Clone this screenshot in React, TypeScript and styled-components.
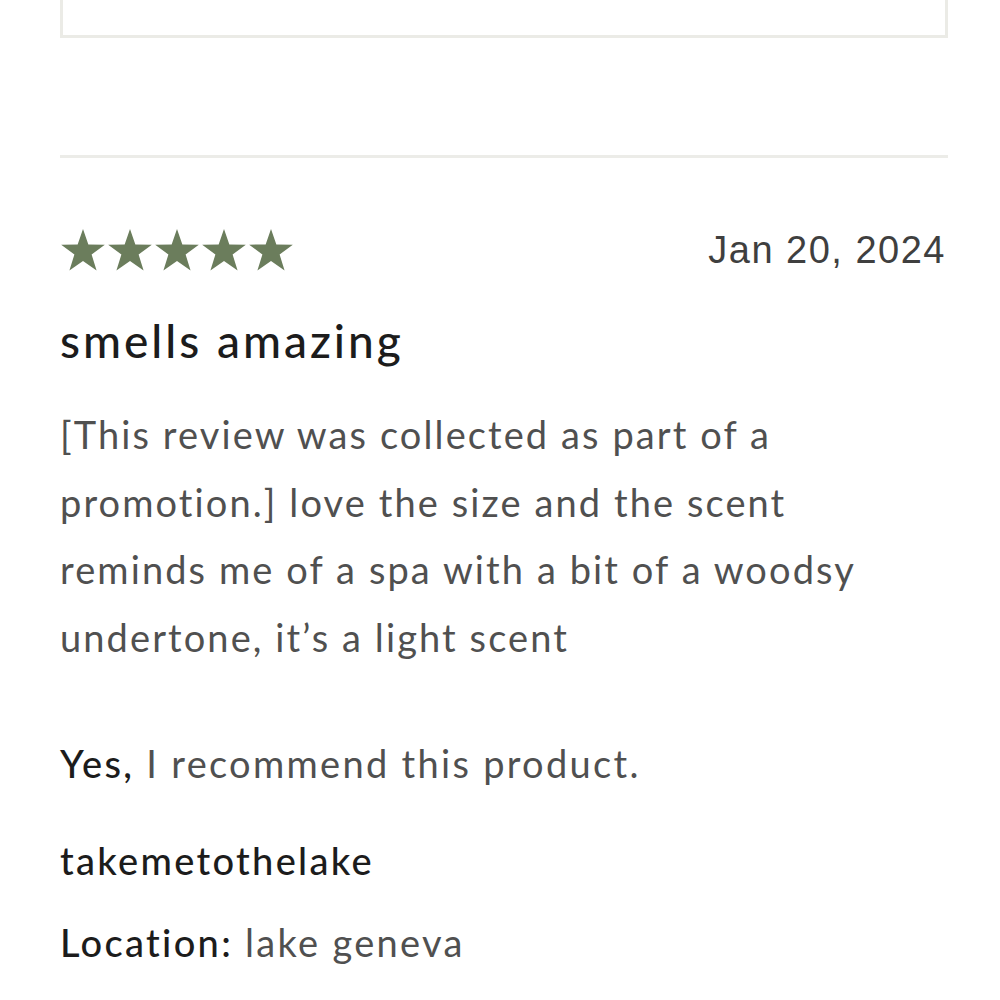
import React from "react";
import styled, { createGlobalStyle } from "styled-components";

const Global = createGlobalStyle`
  html, body { margin: 0; padding: 0; background: #ffffff; }
  body { font-family: Lato, "Noto Sans", sans-serif; }
`;

const Page = styled.div`
  padding: 0 52px 0 60px;
  display: flex;
  flex-direction: column;
`;

const CardBottom = styled.div`
  height: 35px;
  border: 3px solid #ebebe6;
  border-top: none;
`;

const Divider = styled.hr`
  margin: 117px 0 0 0;
  border: none;
  height: 3px;
  background: #ececE8;
`;

const Review = styled.article`
  display: flex;
  flex-direction: column;
  padding-top: 70px;
`;

const HeaderRow = styled.div`
  display: flex;
  justify-content: space-between;
  align-items: center;
  height: 44px;
`;

const Stars = styled.div`
  display: flex;
  gap: 1px;
`;

const DateText = styled.span`
  font-family: "Liberation Sans", Arial, sans-serif;
  font-size: 38px;
  letter-spacing: 1.5px;
  color: #3f3f3f;
  margin-right: 2px;
`;

const Title = styled.h2`
  margin: 42px 0 0 0;
  font-size: 46px;
  font-weight: 500;
  letter-spacing: 3px;
  color: #1c1c1c;
  line-height: 54px;
`;

const Body = styled.p`
  margin: 33px 0 0 0;
  font-size: 38px;
  line-height: 67.5px;
  letter-spacing: 2.1px;
  color: #505050;
  max-width: 870px;
`;

const Meta = styled.p<{ $gap: number }>`
  margin: ${(p) => p.$gap}px 0 0 0;
  font-size: 38px;
  letter-spacing: 2.3px;
  line-height: 46px;
  color: #505050;
`;

const Strong = styled.span`
  color: #1c1c1c;
  font-weight: 500;
`;

const Star = () => (
  <svg width="46" height="44" viewBox="0 0 24 23">
    <polygon
      points="12,0.5 14.8,8.6 23.4,8.7 16.5,13.9 19.1,22.2 12,17.2 4.9,22.2 7.5,13.9 0.6,8.7 9.2,8.6"
      fill="#6b7d5c"
    />
  </svg>
);

export default function App() {
  return (
    <>
      <Global />
      <Page>
        <CardBottom />
        <Divider />
        <Review>
          <HeaderRow>
            <Stars>
              {[0, 1, 2, 3, 4].map((i) => (
                <Star key={i} />
              ))}
            </Stars>
            <DateText>Jan 20, 2024</DateText>
          </HeaderRow>
          <Title>smells amazing</Title>
          <Body>
            [This review was collected as part of a promotion.] love the size and the scent reminds me of a spa
            with a bit of a woodsy undertone, it’s a light scent
          </Body>
          <Meta $gap={68.8}>
            <Strong>Yes,</Strong> I recommend this product.
          </Meta>
          <Meta $gap={51}>
            <Strong>takemetothelake</Strong>
          </Meta>
          <Meta $gap={36}>
            <Strong>Location:</Strong> lake geneva
          </Meta>
        </Review>
      </Page>
    </>
  );
}
